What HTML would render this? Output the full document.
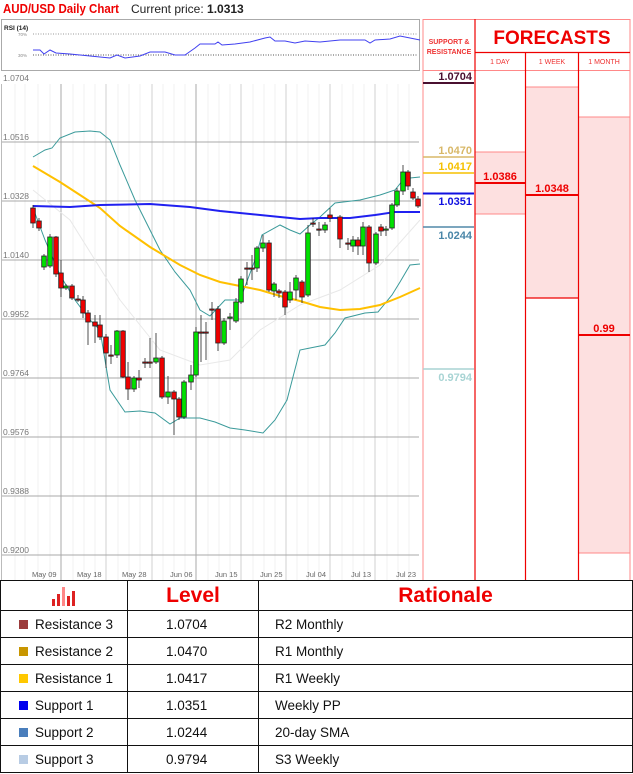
<!DOCTYPE html>
<html><head><meta charset="utf-8">
<style>
html,body{margin:0;padding:0;background:#fff;width:633px;height:774px;overflow:hidden;font-family:"Liberation Sans",sans-serif}
svg{position:absolute;left:0;top:0}
table{position:absolute;left:0;top:580px;width:633px;border-collapse:collapse;font-family:"Liberation Sans",sans-serif;font-size:13.5px;color:#111}
td{border:1.5px solid #111;padding:0;height:26px}
.sq{display:inline-block;width:9px;height:9px;margin:0 7px 0 18px;vertical-align:-0px}
.hd{font-family:"Liberation Sans",sans-serif;font-weight:bold;color:#e00;font-size:21px;text-align:center;height:29px}
</style></head><body>
<svg width="633" height="580" xmlns="http://www.w3.org/2000/svg" font-family="Liberation Sans, sans-serif">
<text x="3" y="13" font-size="12.5" fill="#e00" font-weight="bold" textLength="116" lengthAdjust="spacingAndGlyphs">AUD/USD Daily Chart</text>
<text x="131" y="13" font-size="12" fill="#222">Current price: <tspan font-weight="bold">1.0313</tspan></text>
<!-- RSI box -->
<rect x="1.5" y="19.5" width="418" height="51" fill="#fff" stroke="#aaa"/>
<text x="4" y="30" font-size="6.5" fill="#222" font-weight="bold">RSI (14)</text>
<text x="18" y="36" font-size="4.5" fill="#888">70%</text>
<text x="18" y="57" font-size="4.5" fill="#888">30%</text>
<line x1="33" y1="34" x2="418" y2="34" stroke="#999" stroke-dasharray="1,1.5"/>
<line x1="33" y1="55" x2="418" y2="55" stroke="#555" stroke-dasharray="1,1.5"/>
<polyline fill="none" stroke="#4040f0" stroke-width="1" points="33,50 40,50 44,54 50,50 56,53 70,54 90,56 110,58 117,55 125,58 140,56 150,52 165,52 175,55 185,55 195,48 200,44 215,44 218,42 222,45 235,44 250,42 265,38 270,37 275,41 285,41 295,43 300,42 305,41 320,42 340,40 355,40 365,40 370,43 375,40 390,39 400,36 410,38 420,40"/>
<!-- chart grid -->
<rect x="1" y="84" width="418" height="496" fill="#fff"/>
<g stroke="#f2f2f2" stroke-width="1">
<line x1="15" y1="84" x2="15" y2="580"/><line x1="25" y1="84" x2="25" y2="580"/><line x1="38" y1="84" x2="38" y2="580"/><line x1="50" y1="84" x2="50" y2="580"/>
<line x1="73" y1="84" x2="73" y2="580"/><line x1="84" y1="84" x2="84" y2="580"/><line x1="95" y1="84" x2="95" y2="580"/>
<line x1="118" y1="84" x2="118" y2="580"/><line x1="129" y1="84" x2="129" y2="580"/><line x1="140" y1="84" x2="140" y2="580"/>
<line x1="163" y1="84" x2="163" y2="580"/><line x1="174" y1="84" x2="174" y2="580"/><line x1="185" y1="84" x2="185" y2="580"/>
<line x1="208" y1="84" x2="208" y2="580"/><line x1="219" y1="84" x2="219" y2="580"/><line x1="230" y1="84" x2="230" y2="580"/>
<line x1="253" y1="84" x2="253" y2="580"/><line x1="264" y1="84" x2="264" y2="580"/><line x1="275" y1="84" x2="275" y2="580"/>
<line x1="297" y1="84" x2="297" y2="580"/><line x1="308" y1="84" x2="308" y2="580"/><line x1="319" y1="84" x2="319" y2="580"/>
<line x1="342" y1="84" x2="342" y2="580"/><line x1="353" y1="84" x2="353" y2="580"/><line x1="364" y1="84" x2="364" y2="580"/>
<line x1="387" y1="84" x2="387" y2="580"/><line x1="398" y1="84" x2="398" y2="580"/><line x1="409" y1="84" x2="409" y2="580"/>
</g>
<g stroke="#d0d0d0" stroke-width="1">
<line x1="106" y1="84" x2="106" y2="580"/><line x1="152" y1="84" x2="152" y2="580"/><line x1="241" y1="84" x2="241" y2="580"/><line x1="286" y1="84" x2="286" y2="580"/><line x1="330" y1="84" x2="330" y2="580"/><line x1="375" y1="84" x2="375" y2="580"/>
</g>
<g stroke="#a8a8a8" stroke-width="1">
<line x1="61" y1="84" x2="61" y2="580"/><line x1="196" y1="84" x2="196" y2="580"/>
<line x1="1" y1="142" x2="419" y2="142"/><line x1="1" y1="201" x2="419" y2="201"/><line x1="1" y1="260" x2="419" y2="260"/><line x1="1" y1="319" x2="419" y2="319"/><line x1="1" y1="378" x2="419" y2="378"/><line x1="1" y1="437" x2="419" y2="437"/><line x1="1" y1="496" x2="419" y2="496"/><line x1="1" y1="555" x2="419" y2="555"/>
</g>
<line x1="1.5" y1="84" x2="1.5" y2="580" stroke="#bbb"/>
<g font-size="8.5" fill="#777">
<text x="3" y="81">1.0704</text><text x="3" y="140">1.0516</text><text x="3" y="199">1.0328</text><text x="3" y="258">1.0140</text><text x="3" y="317">0.9952</text><text x="3" y="376">0.9764</text><text x="3" y="435">0.9576</text><text x="3" y="494">0.9388</text><text x="3" y="553">0.9200</text>
</g>
<g font-size="7.5" fill="#666">
<text x="32" y="577">May 09</text><text x="77" y="577">May 18</text><text x="122" y="577">May 28</text><text x="170" y="577">Jun 06</text><text x="215" y="577">Jun 15</text><text x="260" y="577">Jun 25</text><text x="306" y="577">Jul 04</text><text x="351" y="577">Jul 13</text><text x="396" y="577">Jul 23</text>
</g>
<!-- indicators -->
<polyline fill="none" stroke="#e8e8e8" stroke-width="1" points="33,190 70,220 120,300 160,350 200,365 230,360 260,330 300,305 340,290 380,265 420,220"/>
<polyline fill="none" stroke="#3a9a9a" stroke-width="1" points="33,157 45,150 52,148 60,138 75,132 90,131 100,132 110,140 120,165 135,200 150,230 160,250 175,272 190,290 200,310 210,316 225,300 240,300 255,260 262,235 280,225 290,230 300,234 310,225 320,217 335,203 360,200 380,195 395,190 403,180 410,178 420,177"/>
<polyline fill="none" stroke="#3a9a9a" stroke-width="1" points="33,208 45,240 60,275 75,300 90,320 100,330 110,390 125,412 140,411 155,413 170,424 180,418 200,418 215,422 230,428 245,430 263,433 275,420 287,400 300,350 310,348 325,345 335,333 345,318 365,313 378,312 392,295 400,282 410,265 420,264"/>
<polyline fill="none" stroke="#ffc000" stroke-width="2" points="33,166 60,182 80,195 100,208 120,226 150,247 180,265 200,275 220,282 240,286 260,290 280,296 300,301 320,307 340,310 360,309 380,305 400,297 420,288"/>
<polyline fill="none" stroke="#2020f0" stroke-width="2" points="33,206 70,207 100,205 150,204 190,207 220,211 250,214 280,217 300,219 320,218 350,218 375,215 395,212 420,212"/>
<!-- candles -->
<g id="c" stroke="#222" stroke-width="0.8"></g>
<!-- right panel -->
<rect x="526" y="87" width="52" height="211" fill="#fde0e0"/>
<rect x="475" y="152" width="50" height="62" fill="#fde0e0"/>
<rect x="578" y="117" width="52" height="436" fill="#fde0e0"/>
<g stroke="#f88" stroke-width="1">
<line x1="423" y1="19" x2="423" y2="580"/>
<line x1="423" y1="19.5" x2="630" y2="19.5"/>
<line x1="423" y1="70.5" x2="630" y2="70.5"/>
<line x1="630" y1="19" x2="630" y2="580"/>
<line x1="475" y1="152" x2="525" y2="152"/><line x1="475" y1="214" x2="525" y2="214"/>
<line x1="526" y1="87" x2="578" y2="87"/>
<line x1="578" y1="117" x2="630" y2="117"/><line x1="578" y1="553" x2="630" y2="553"/>
</g>
<g stroke="#e00" stroke-width="1.2">
<line x1="475" y1="19" x2="475" y2="580"/>
<line x1="475" y1="52.5" x2="630" y2="52.5"/>
<line x1="525.5" y1="52" x2="525.5" y2="580"/>
<line x1="578.5" y1="52" x2="578.5" y2="580"/>
<line x1="526" y1="298" x2="578" y2="298"/>
</g>
<text x="449" y="44" font-size="7" fill="#e33" font-weight="bold" text-anchor="middle">SUPPORT &amp;</text>
<text x="449" y="54" font-size="7" fill="#e33" font-weight="bold" text-anchor="middle">RESISTANCE</text>
<text x="552" y="44" font-size="19" fill="#e00" font-weight="bold" text-anchor="middle">FORECASTS</text>
<g font-size="7" fill="#e33" text-anchor="middle"><text x="500" y="64">1 DAY</text><text x="552" y="64">1 WEEK</text><text x="604" y="64">1 MONTH</text></g>
<g font-size="11" font-weight="bold" text-anchor="end">
<text x="472" y="80" fill="#4a1030">1.0704</text>
<text x="472" y="154" fill="#d8b868">1.0470</text>
<text x="472" y="170" fill="#f5c000">1.0417</text>
<text x="472" y="205" fill="#1010e0">1.0351</text>
<text x="472" y="239" fill="#4a86a8">1.0244</text>
<text x="472" y="381" fill="#a8d4d4">0.9794</text>
</g>
<line x1="423" y1="83" x2="474" y2="83" stroke="#4a1030" stroke-width="2"/>
<line x1="423" y1="157" x2="474" y2="157" stroke="#d8b868" stroke-width="1.5"/>
<line x1="423" y1="173" x2="474" y2="173" stroke="#f5c000" stroke-width="1.5"/>
<line x1="423" y1="193.5" x2="474" y2="193.5" stroke="#1010e0" stroke-width="2"/>
<line x1="423" y1="227" x2="474" y2="227" stroke="#5088a8" stroke-width="1.5"/>
<line x1="423" y1="369" x2="474" y2="369" stroke="#a8d4d4" stroke-width="1.5"/>
<g font-size="11" font-weight="bold" fill="#e00" text-anchor="middle">
<text x="500" y="180">1.0386</text><text x="552" y="192">1.0348</text><text x="604" y="332">0.99</text>
</g>
<line x1="475" y1="183" x2="525" y2="183" stroke="#e00" stroke-width="2"/>
<line x1="526" y1="195" x2="578" y2="195" stroke="#e00" stroke-width="2"/>
<line x1="578" y1="335" x2="630" y2="335" stroke="#e00" stroke-width="2"/>
</svg>
<table>
<tr><td style="width:126px;text-align:center" class="hd"><svg width="26" height="20" style="position:static;vertical-align:middle"><rect x="1" y="13" width="3" height="7" fill="#d22"/><rect x="6" y="8" width="3" height="12" fill="#d22"/><rect x="11" y="1" width="3" height="19" fill="#f88"/><rect x="16" y="10" width="3" height="10" fill="#d22"/><rect x="21" y="5" width="3" height="15" fill="#d22"/></svg></td><td class="hd" style="width:130px">Level</td><td class="hd">Rationale</td></tr>
<tr><td><span class="sq" style="background:#9b3b3b"></span>Resistance 3</td><td style="padding-left:38px">1.0704</td><td style="padding-left:16px">R2 Monthly</td></tr>
<tr><td><span class="sq" style="background:#c89600"></span>Resistance 2</td><td style="padding-left:38px">1.0470</td><td style="padding-left:16px">R1 Monthly</td></tr>
<tr><td><span class="sq" style="background:#ffc800"></span>Resistance 1</td><td style="padding-left:38px">1.0417</td><td style="padding-left:16px">R1 Weekly</td></tr>
<tr><td><span class="sq" style="background:#0000ee"></span>Support 1</td><td style="padding-left:38px">1.0351</td><td style="padding-left:16px">Weekly PP</td></tr>
<tr><td><span class="sq" style="background:#4a7ebc"></span>Support 2</td><td style="padding-left:38px">1.0244</td><td style="padding-left:16px">20-day SMA</td></tr>
<tr><td><span class="sq" style="background:#b8cce4"></span>Support 3</td><td style="padding-left:38px">0.9794</td><td style="padding-left:16px">S3 Weekly</td></tr>
</table>
<script>
var d=[[33,208,223,205,228],[39,221,228,218,231],[44,267,256,254,270],[50,266,237,234,268],[56,237,274,236,277],[61,273,288,260,297],[66,288,286,284,290],[72,286,298,284,300],[78,299,300,295,302],[83,300,313,296,318],[88,313,322,310,345],[95,322,326,315,343],[100,325,337,315,340],[106,337,353,334,368],[111,355,356,345,364],[117,355,331,330,358],[123,331,377,330,378],[128,377,389,362,400],[134,389,378,376,392],[139,378,380,370,388],[145,362,363,358,368],[150,362,363,338,368],[156,362,358,333,364],[162,358,397,356,399],[168,397,392,376,404],[174,392,399,390,435],[179,399,417,397,420],[184,417,382,380,419],[191,382,375,365,390],[196,375,332,327,377],[201,332,333,315,362],[206,332,333,322,360],[212,309,310,302,320],[218,309,343,306,351],[224,343,321,318,345],[230,318,317,313,330],[236,321,302,298,323],[241,302,279,276,304],[247,268,269,262,285],[252,268,269,255,280],[257,268,248,246,272],[263,248,243,235,252],[269,243,290,240,292],[274,291,284,282,297],[279,291,293,289,298],[285,292,307,290,315],[290,300,292,282,303],[296,290,278,275,300],[302,282,297,280,303],[308,295,233,225,297],[313,223,224,218,227],[319,229,230,222,236],[325,230,225,222,233],[330,215,218,208,222],[340,217,239,215,248],[348,243,244,238,250],[353,246,240,236,252],[358,240,246,237,255],[363,246,227,222,255],[369,227,263,225,272],[376,263,234,232,265],[381,227,231,224,236],[386,230,229,226,236],[392,228,205,203,230],[397,205,191,188,207],[403,191,172,165,195],[408,172,186,170,190],[413,192,198,188,200],[418,199,206,196,208]];
var g=document.getElementById('c'),s='';
d.forEach(function(c){var x=c[0],o=c[1],cl=c[2],t=Math.min(o,cl),b=Math.max(o,cl),h=Math.max(b-t,1.2);
s+='<line x1="'+x+'" y1="'+c[3]+'" x2="'+x+'" y2="'+c[4]+'"/>';
s+='<rect x="'+(x-2.3)+'" y="'+t+'" width="4.6" height="'+h+'" fill="'+(cl<o?'#00e000':'#ee0000')+'"/>';});
g.innerHTML=s;
</script>
</body></html>
